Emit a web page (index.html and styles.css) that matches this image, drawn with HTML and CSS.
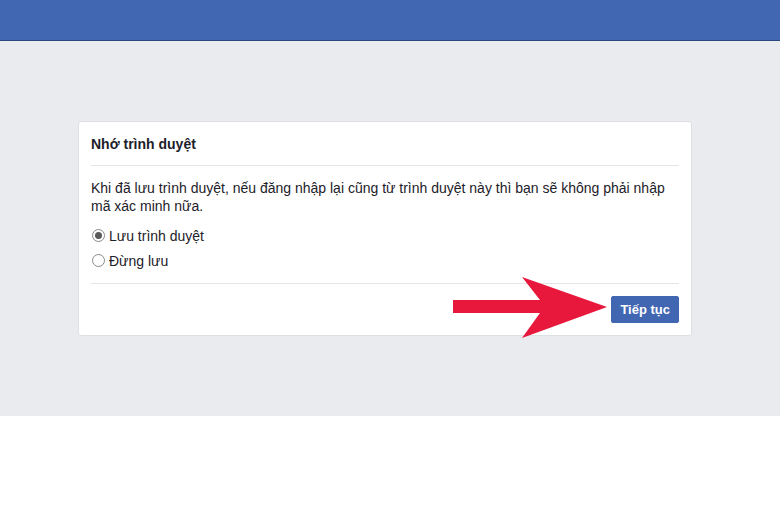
FILE: index.html
```html
<!DOCTYPE html>
<html lang="vi">
<head>
<meta charset="utf-8">
<title>Nhớ trình duyệt</title>
<link rel="stylesheet" href="styles.css">
</head>
<body>
<header class="topbar"></header>
<main class="stage">
  <section class="card">
    <h2 class="card-title">Nhớ trình duyệt</h2>
    <div class="card-body">
      <p class="desc">Khi đã lưu trình duyệt, nếu đăng nhập lại cũng từ trình duyệt này thì bạn sẽ không phải nhập mã xác minh nữa.</p>
      <label class="option"><input type="radio" name="save" class="radio" checked><span>Lưu trình duyệt</span></label>
      <label class="option"><input type="radio" name="save" class="radio"><span>Đừng lưu</span></label>
    </div>
    <div class="card-footer">
      <button class="btn-primary">Tiếp tục</button>
    </div>
  </section>
</main>
<svg class="arrow" width="180" height="80" viewBox="0 0 180 80" aria-hidden="true">
  <polygon points="13,35 100,35 82,12 167,42 82,73 100,48 13,48" fill="#e8173c"/>
</svg>
</body>
</html>
```

FILE: styles.css
```css
* { box-sizing: border-box; }
html, body { margin: 0; padding: 0; }
body {
  position: relative;
  width: 780px;
  height: 520px;
  background: #ffffff;
  font-family: "Liberation Sans", Arial, sans-serif;
  color: #1d2129;
  overflow: hidden;
}
.topbar {
  height: 41px;
  background: #4267b2;
  border-bottom: 1px solid #29487d;
}
.stage {
  height: 375px;
  background: #e9ebee;
  padding-top: 80px;
}
.card {
  margin-left: 78px;
  width: 614px;
  background: #ffffff;
  border: 1px solid #dddfe2;
  border-radius: 3px;
  padding: 0 12px;
}
.card-title {
  margin: 0;
  padding: 12px 0 11px;
  font-size: 14px;
  line-height: 20px;
  font-weight: bold;
  color: #1d2129;
  border-bottom: 1px solid #e5e5e5;
}
.card-body {
  padding: 13px 0 10px;
  border-bottom: 1px solid #e5e5e5;
}
.desc {
  margin: 0 0 8px;
  font-size: 14px;
  line-height: 18px;
  color: #1d2129;
}
.option {
  display: flex;
  align-items: center;
  height: 25px;
  font-size: 14px;
  color: #1d2129;
}
.radio {
  appearance: none;
  -webkit-appearance: none;
  width: 13px;
  height: 13px;
  margin: 0 4px 0 1px;
  border: 1px solid #8a8a8a;
  border-radius: 50%;
  background: #fff;
  display: grid;
  place-items: center;
}
.radio:checked::after {
  content: "";
  width: 7px;
  height: 7px;
  border-radius: 50%;
  background: #5a5a5a;
}
.card-footer {
  display: flex;
  justify-content: flex-end;
  padding: 12px 0 12px;
}
.btn-primary {
  height: 27px;
  padding: 0 8px;
  background: #4267b2;
  border: 1px solid #4267b2;
  border-radius: 2px;
  color: #ffffff;
  font-family: "Liberation Sans", Arial, sans-serif;
  font-size: 13px;
  font-weight: bold;
}
.arrow {
  position: absolute;
  left: 440px;
  top: 265px;
}
```
